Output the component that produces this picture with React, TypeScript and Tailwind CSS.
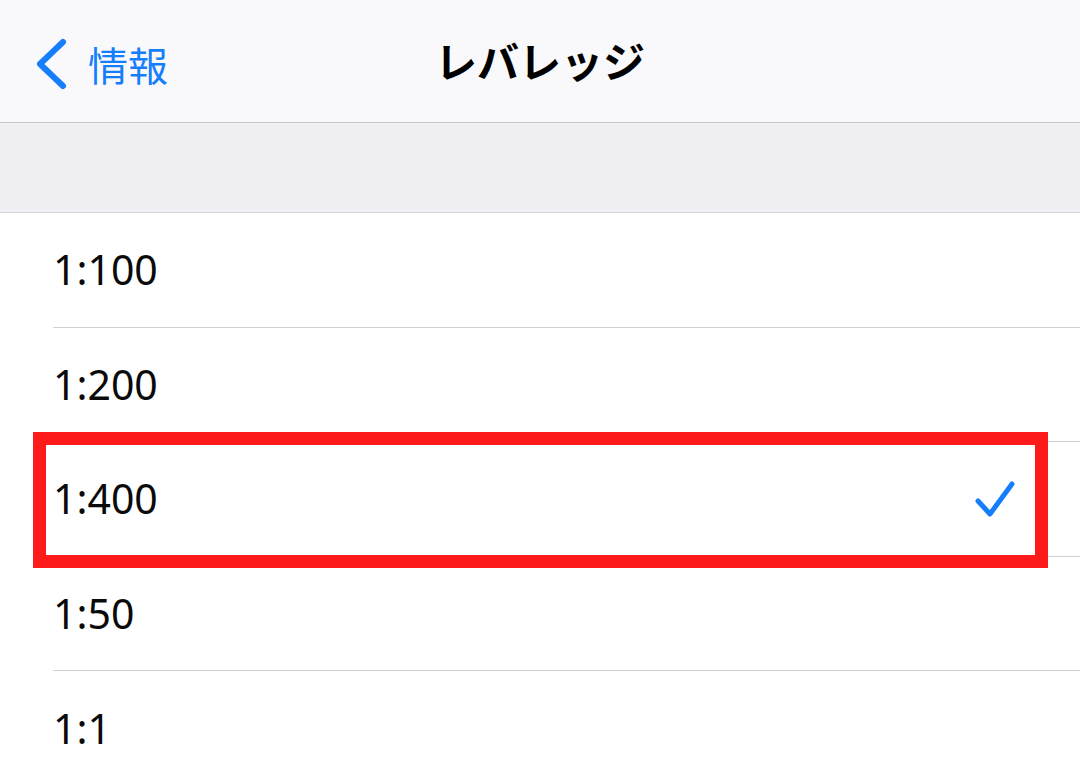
const options = ["1:100", "1:200", "1:400", "1:50", "1:1"];
const selected = "1:400";

export default function App() {
  return (
    <div
      className="relative w-[1080px] h-[780px] overflow-hidden bg-white"
      style={{ fontFamily: '"Noto Sans", "Noto Sans CJK JP", sans-serif' }}
    >
      {/* nav bar */}
      <div className="relative flex items-center justify-center h-[123px] bg-[#f9f9fb] border-b border-[#c6c6c8]">
        <div className="absolute left-[34px] top-[38px] flex items-center text-[#157efb]">
          <svg width="34" height="52" viewBox="0 0 34 52" fill="none">
            <path
              d="M29 4 L6 26 L29 48"
              stroke="#157efb"
              strokeWidth="6"
              strokeLinecap="round"
              strokeLinejoin="round"
            />
          </svg>
          <span
            className="ml-[20px] text-[40px] leading-none"
            style={{ fontFamily: '"Noto Sans CJK JP", sans-serif' }}
          >
            情報
          </span>
        </div>
        <span
          className="text-[42px] font-bold text-black leading-none -mt-[2px]"
          style={{ fontFamily: '"Noto Sans CJK JP", sans-serif' }}
        >
          レバレッジ
        </span>
      </div>

      {/* section header */}
      <div className="h-[90px] bg-[#efeff4] border-b border-[#d5d5d8]" />

      {/* options */}
      <div className="pl-[53px]">
        {options.map((o) => (
          <div
            key={o}
            className="flex items-center justify-between h-[114.5px] pr-[64px] border-b border-[#d1d1d4] last:border-b-0"
          >
            <span className="text-[41px] text-[#0a0a0a] leading-none">{o}</span>
            {o === selected && (
              <svg width="42" height="40" viewBox="0 0 42 40" fill="none">
                <path
                  d="M4 22 L16 35 L38 5"
                  stroke="#157efb"
                  strokeWidth="5"
                  strokeLinecap="round"
                  strokeLinejoin="round"
                />
              </svg>
            )}
          </div>
        ))}
      </div>

      {/* red highlight */}
      <div className="absolute left-[33px] top-[432px] w-[1015px] h-[136px] border-[13px] border-[#fd1a1a]" />
    </div>
  );
}
